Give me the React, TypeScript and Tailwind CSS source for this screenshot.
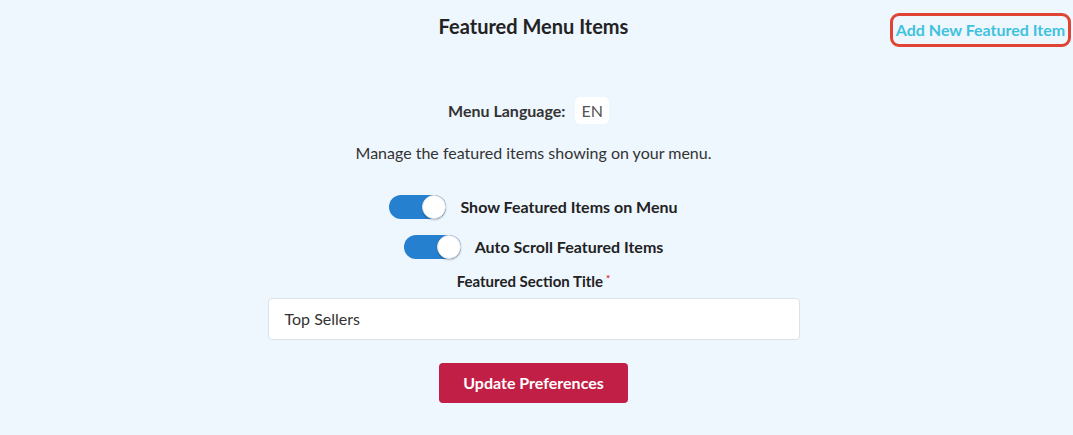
import React from 'react';

function Toggle() {
  return (
    <div className="relative w-[57px] h-[24px] rounded-full bg-[#2680d0] shrink-0">
      <div className="absolute right-0 top-0 w-[24px] h-[24px] rounded-full bg-white border border-[#e3e3e3] shadow-[0_1px_2px_rgba(0,0,0,0.25)]" />
    </div>
  );
}

export default function App() {
  return (
    <div
      className="w-[1073px] h-[435px] bg-[#eef6fe] text-[#222] relative"
      style={{ fontFamily: 'Lato, "Noto Sans", sans-serif' }}
    >
      <div className="flex flex-col items-center pr-[6px]">
        <h1 className="mt-[14px] text-[20px] font-bold leading-[24px] text-[#222]">Featured Menu Items</h1>

        <div className="mt-[59px] flex items-center gap-[10px] pr-[10px]">
          <span className="text-[16px] font-bold text-[#333]">Menu Language:</span>
          <span className="bg-white rounded-[5px] px-[6px] h-[27px] flex items-center text-[16px] text-[#555]">EN</span>
        </div>

        <p className="mt-[19px] text-[16px] text-[#333] leading-[20px]">Manage the featured items showing on your menu.</p>

        <div className="mt-[32px] flex items-center gap-[14px] h-[24px]">
          <Toggle />
          <span className="text-[16px] font-bold text-[#222] leading-[24px]">Show Featured Items on Menu</span>
        </div>
        <div className="mt-[16px] flex items-center gap-[14px] h-[24px]">
          <Toggle />
          <span className="text-[16px] font-bold text-[#222] leading-[24px]">Auto Scroll Featured Items</span>
        </div>

        <div className="mt-[12px] text-[15px] font-bold text-[#222] leading-[20px]">
          Featured Section Title<sup className="text-[#e0202a] ml-[3px] text-[10px]">*</sup>
        </div>

        <div className="mt-[7px] w-[532px] h-[42px] bg-white border border-[#dde2e8] rounded-[4px] flex items-center px-[16px] text-[16px] text-[#333]">
          Top Sellers
        </div>

        <button className="mt-[23px] w-[189px] h-[40px] bg-[#c11f45] rounded-[4px] text-white text-[16px] font-bold">
          Update Preferences
        </button>
      </div>

      <button className="absolute left-[890px] top-[13px] w-[181px] h-[34px] border-[3px] border-[#e04434] rounded-[9px] text-[16px] font-bold text-[#3ec2dd] flex items-center justify-center">
        Add New Featured Item
      </button>
    </div>
  );
}
